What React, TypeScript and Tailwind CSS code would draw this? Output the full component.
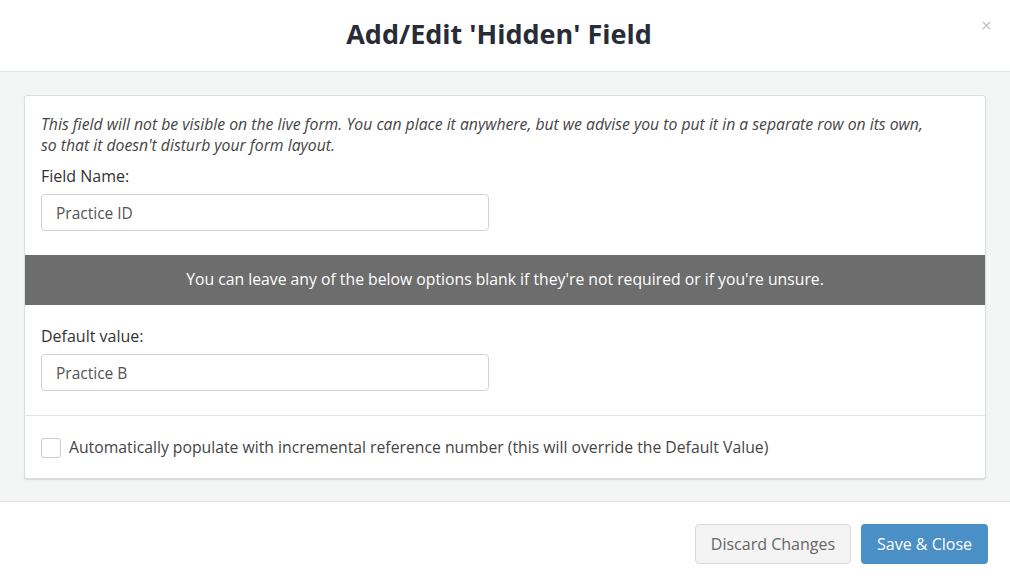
import { X } from 'lucide-react';

export default function App() {
  return (
    <div className="w-[1010px] h-[586px] bg-white flex flex-col font-['Open_Sans',sans-serif] text-[#333]">
      <header className="relative h-[72px] shrink-0 flex items-center justify-center pr-[12px] pb-[4px] border-b border-[#dfe3e3]">
        <h1 className="text-[27px] font-bold text-[#272c36] leading-none">Add/Edit 'Hidden' Field</h1>
        <button className="absolute right-[17px] top-[19px] text-[#c7c7c7]">
          <X size={13} strokeWidth={3} />
        </button>
      </header>

      <main className="h-[430px] shrink-0 bg-[#f4f6f5] border-b border-[#dfe3e3] px-6 pt-[23px]">
        <div className="bg-white border border-[#dadfdf] rounded-[3px] shadow-[0_1px_1px_rgba(0,0,0,0.12)]">
          <div className="px-4 pt-[18px] pb-[24px]">
            <p className="italic text-[15.75px] leading-[21px] text-[#444]">
              This field will not be visible on the live form. You can place it anywhere, but we advise you to put it in a separate row on its own,
              <br />
              so that it doesn't disturb your form layout.
            </p>
            <label className="block mt-[9px] text-[16px] leading-[22px]">Field Name:</label>
            <input
              readOnly
              value="Practice ID"
              className="mt-[7px] block w-[448px] h-[37px] px-[14px] border border-[#cdd3d6] rounded-[4px] text-[15.5px] text-[#555] outline-none"
            />
          </div>

          <div className="h-[50px] bg-[#6d6d6d] text-white text-[15.75px] flex items-center justify-center">
            You can leave any of the below options blank if they're not required or if you're unsure.
          </div>

          <div className="px-4 pt-[20px] pb-[24px] border-b border-[#e3e6e6]">
            <label className="block text-[16px] leading-[22px]">Default value:</label>
            <input
              readOnly
              value="Practice B"
              className="mt-[7px] block w-[448px] h-[37px] px-[14px] border border-[#cdd3d6] rounded-[4px] text-[15.5px] text-[#555] outline-none"
            />
          </div>

          <div className="px-4 h-[62px] pt-[2px] flex items-center gap-2">
            <span className="w-5 h-5 border border-[#c8cdd0] rounded-[3px] bg-white shrink-0" />
            <span className="text-[15.75px] text-[#444]">
              Automatically populate with incremental reference number (this will override the Default Value)
            </span>
          </div>
        </div>
      </main>

      <footer className="flex-1 flex justify-end items-start gap-[10px] px-[22px] pt-[22px]">
        <button className="h-[40px] px-[15px] border border-[#d6dbdb] rounded-[4px] bg-[#f4f4f4] text-[16px] text-[#666]">
          Discard Changes
        </button>
        <button className="h-[40px] px-4 rounded-[4px] bg-[#4a8fc6] text-[16px] text-white">
          Save &amp; Close
        </button>
      </footer>
    </div>
  );
}
